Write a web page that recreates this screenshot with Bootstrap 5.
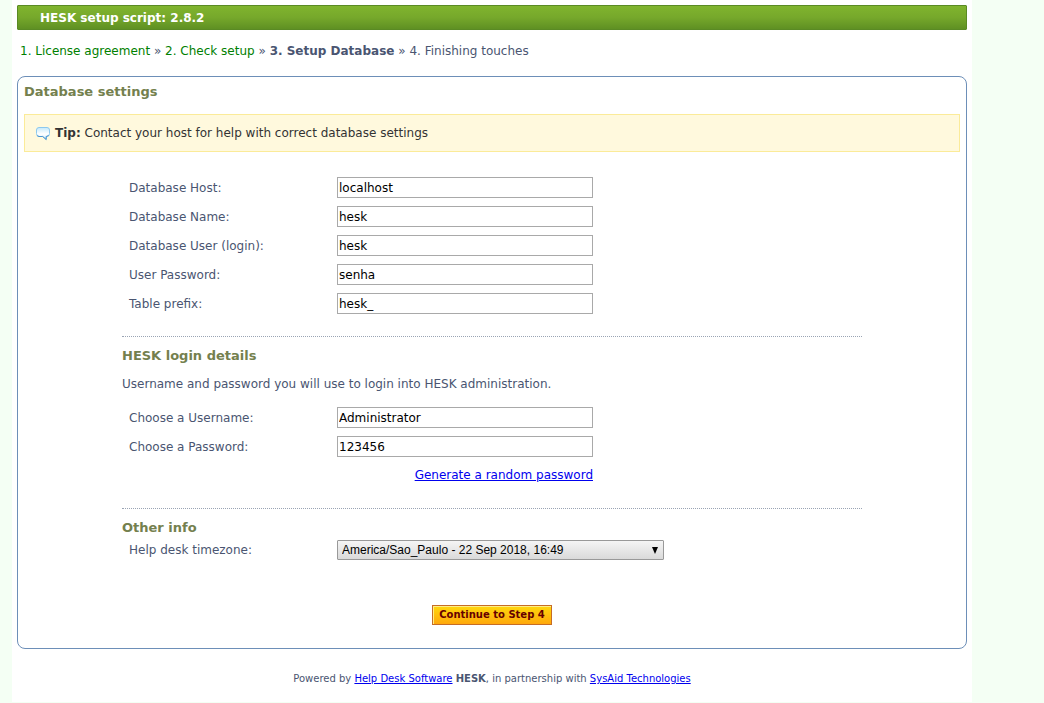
<!DOCTYPE html>
<html lang="en">
<head>
<meta charset="utf-8">
<meta name="viewport" content="width=device-width, initial-scale=1">
<title>HESK setup script: 2.8.2</title>
<link href="https://cdn.jsdelivr.net/npm/bootstrap@5.3.0/dist/css/bootstrap.min.css" rel="stylesheet">
<style>
body { background: #f4fff4; color: #4a5571; font: 12px/18px "DejaVu Sans", Verdana, sans-serif; }
a { color: #00e; }
.page { max-width: 960px; margin-left: 12px; padding: 5px 5px 14px; }
.titlebar { height: 25px; padding-left: 22px; font-size: 12px; line-height: 24px; font-weight: bold; color: #fff; border: 1px solid #5a8a24; border-radius: 1px; background: linear-gradient(#80b42e, #76a82b 50%, #5f9023); }
.steps { padding: 12px 3px 16px; }
.steps a { color: #008000; text-decoration: none; }
.panel { border: 1px solid #6d8fb8; border-radius: 8px; padding: 6px 6px 23px; }
.section-title { font-size: 13px; line-height: 18px; font-weight: bold; color: #74804e; margin: 0; }
.tip { margin: 13px 0 25px; height: 38px; padding: 0 10px; gap: 4px; color: #333; background: #fff9dd; border: 1px solid #fbeb99; border-radius: 0; }
.setup-form { max-width: 740px; }
.field { display: grid; grid-template-columns: 208px minmax(0, 1fr); align-items: center; padding-left: 7px; }
.fields { gap: 8px; }
.box { width: 256px; max-width: 100%; height: 21px; padding: 0 1px; font-size: 12px; line-height: 19px; color: #000; border: 1px solid #a9a9a9; border-radius: 0; }
.intro { margin: 10px 0 14px; }
.timezone { padding-top: 3px; }
.zone { width: 327px; max-width: 100%; height: 20px; padding: 0 4px; font: 12px/18px "Liberation Sans", Arial, sans-serif; color: #000; border: 1px solid #999; border-radius: 1px; background: url("data:image/svg+xml,%3Csvg xmlns='http://www.w3.org/2000/svg' width='6' height='7'%3E%3Cpath d='M0 0h6L3 7z'/%3E%3C/svg%3E") no-repeat right 5px center / 6px 7px, linear-gradient(#f5f5f5, #dadada); }
.divider { border: 0; border-top: 1px dotted #9aa4b4; opacity: 1; margin: 22px 0 10px; }
.random { width: 256px; max-width: 100%; line-height: 21px; }
.actions { padding-top: 45px; }
.continue { height: 20px; padding: 0 6px; font-size: 10px; line-height: 18px; font-weight: bold; color: #660000; border: 1px solid #c66d25; border-radius: 0; background: linear-gradient(#ffd80c, #ffa80c); box-shadow: inset 1px 1px #ffec85; }
.continue:hover { color: #660000; border-color: #c66d25; }
.powered { font-size: 10px; line-height: 18px; padding-top: 21px; }
</style>
</head>
<body>
<div class="page bg-white">
  <header class="titlebar">HESK setup script: 2.8.2</header>
  <nav class="steps" aria-label="Setup steps"><a href="#">1. License agreement</a> » <a href="#">2. Check setup</a> » <b>3. Setup Database</b> » 4. Finishing touches</nav>
  <main class="panel">
    <h1 class="section-title">Database settings</h1>
    <div class="alert tip d-flex align-items-center">
      <svg width="16" height="16" viewBox="0 0 16 16" aria-hidden="true">
        <defs><linearGradient id="bubble" x2="0" y2="1"><stop stop-color="#c4e9fb"/><stop offset=".55" stop-color="#fff"/><stop offset="1" stop-color="#d2edfc"/></linearGradient></defs>
        <path d="M4 2.500H12Q14.500 2.500 14.500 5V8.500Q14.500 11.500 12 11.500H11.200V14.500L7.700 11.500H4Q1.500 11.500 1.500 8.500V5Q1.500 2.500 4 2.500Z" fill="url(#bubble)" stroke="#8cc8ee"/>
        <path d="M2.200 10.700L4 11.500H7.700L11.200 14.500V11.500L13.700 10.500" fill="none" stroke="#4a94d0"/>
      </svg>
      <span><b>Tip:</b> Contact your host for help with correct database settings</span>
    </div>
    <form class="setup-form mx-auto">
      <div class="fields d-flex flex-column">
        <div class="field"><label for="host">Database Host:</label><input class="form-control box" id="host" type="text" value="localhost"></div>
        <div class="field"><label for="name">Database Name:</label><input class="form-control box" id="name" type="text" value="hesk"></div>
        <div class="field"><label for="user">Database User (login):</label><input class="form-control box" id="user" type="text" value="hesk"></div>
        <div class="field"><label for="pass">User Password:</label><input class="form-control box" id="pass" type="text" value="senha"></div>
        <div class="field"><label for="prefix">Table prefix:</label><input class="form-control box" id="prefix" type="text" value="hesk_"></div>
      </div>
      <hr class="divider">
      <h2 class="section-title">HESK login details</h2>
      <p class="intro">Username and password you will use to login into HESK administration.</p>
      <div class="fields d-flex flex-column">
        <div class="field"><label for="admin">Choose a Username:</label><input class="form-control box" id="admin" type="text" value="Administrator"></div>
        <div class="field"><label for="adminpass">Choose a Password:</label><input class="form-control box" id="adminpass" type="text" value="123456"></div>
        <div class="field"><span></span><div class="random text-end"><a href="#">Generate a random password</a></div></div>
      </div>
      <hr class="divider">
      <h2 class="section-title">Other info</h2>
      <div class="field timezone"><label for="zone">Help desk timezone:</label><select class="form-select zone" id="zone"><option>America/Sao_Paulo - 22 Sep 2018, 16:49</option></select></div>
      <div class="actions d-flex justify-content-center"><button class="btn continue" type="submit">Continue to Step 4</button></div>
    </form>
  </main>
  <footer class="powered text-center">Powered by <a href="#">Help Desk Software</a> <b>HESK</b>, in partnership with <a href="#">SysAid Technologies</a></footer>
</div>
<script src="https://cdn.jsdelivr.net/npm/bootstrap@5.3.0/dist/js/bootstrap.bundle.min.js"></script>
</body>
</html>
